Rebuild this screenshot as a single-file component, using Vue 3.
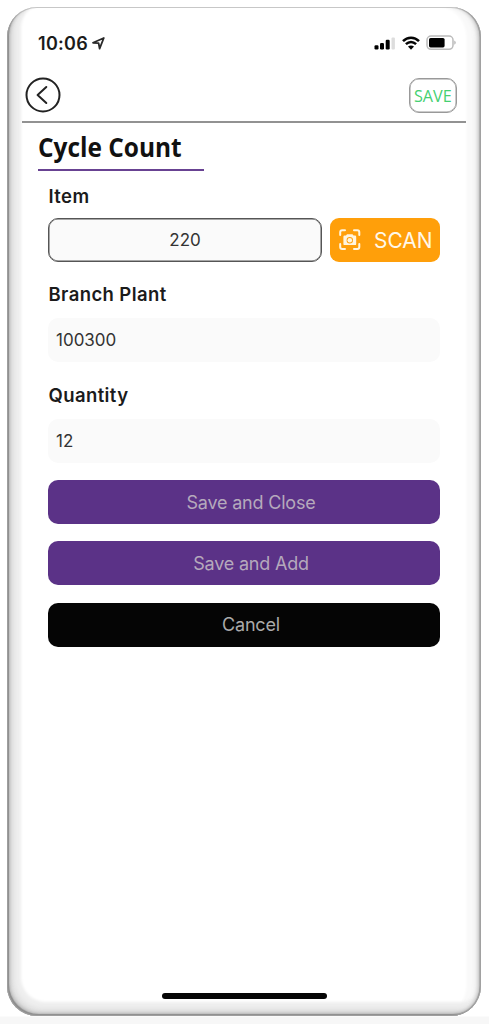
<script setup>
import { ref } from 'vue'
const item = ref('220')
const plant = ref('100300')
const quantity = ref('12')
</script>

<template>
  <div class="stage">
    <main class="phone">
      <div class="status">
        <span class="clock">10:06</span>
        <svg class="location" width="13" height="13" viewBox="0 0 13 13"><path d="M1 5.8 11.8 1 7.6 11.6 6.6 6.2Z" /></svg>
        <svg class="signal" width="22" height="14" viewBox="0 0 22 14">
          <rect x="0.5" y="9.3" width="4" height="4.2" rx="1.2" /><rect x="6" y="7" width="4" height="6.5" rx="1.2" />
          <rect x="11.7" y="3.8" width="4" height="9.7" rx="1.2" /><rect class="faint" x="17.5" y="1.5" width="3.4" height="12" rx="1" />
        </svg>
        <svg class="wifi" width="18" height="14" viewBox="0 0 18 14">
          <path d="M1 5.2C5.5.6 12.5.6 17 5.2M3.9 8.2C7 5.3 11 5.3 14.1 8.2" />
          <path class="dot" d="M6 10.6C7.8 9 10.2 9 12 10.6L9 13.8Z" />
        </svg>
        <svg class="battery" width="31" height="16" viewBox="0 0 31 16">
          <rect class="shell" x="1" y="1" width="26" height="13.3" rx="4" />
          <rect x="3" y="3" width="15.6" height="9.4" rx="1.6" />
          <path class="tip" d="M28.4 5.6Q31 7.7 28.4 9.8Z" />
        </svg>
      </div>

      <header class="bar">
        <button class="back" aria-label="Back">
          <svg width="36" height="36" viewBox="0 0 36 36"><circle cx="18" cy="18" r="16.5" /><path d="M21.3 10 12.6 18 21.3 26" /></svg>
        </button>
        <button class="save"><span>SAVE</span></button>
      </header>

      <h1><span>Cycle Count</span></h1>

      <section class="form">
        <label for="item">Item</label>
        <div class="scan-row">
          <input id="item" v-model="item" />
          <button class="scan">
            <svg width="22" height="22" viewBox="0 0 22 22">
              <path class="frame" d="M1.2 6V3.2Q1.2 1.2 3.2 1.2H6M15 1.2H18.3Q20.3 1.2 20.3 3.2V6M20.3 15V18Q20.3 20 18.3 20H15M6 20H3.2Q1.2 20 1.2 18V15" />
              <path class="camera" fill-rule="evenodd" d="M8 5.2H13.5L14.5 6.6H16Q17.2 6.6 17.2 7.8V14.9Q17.2 16.1 16 16.1H5.6Q4.4 16.1 4.4 14.9V7.8Q4.4 6.6 5.6 6.6H7ZM10.8 8A3.2 3.2 0 1 0 10.8 14.4A3.2 3.2 0 1 0 10.8 8Z" />
              <circle class="camera" cx="10.8" cy="11.2" r="2.3" />
            </svg>
            <span>SCAN</span>
          </button>
        </div>
        <label for="plant">Branch Plant</label>
        <input id="plant" v-model="plant" />
        <label for="quantity">Quantity</label>
        <input id="quantity" v-model="quantity" />
        <div class="actions">
          <button>Save and Close</button>
          <button>Save and Add</button>
          <button class="cancel">Cancel</button>
        </div>
      </section>
      <div class="home"></div>
    </main>
  </div>
</template>

<style>
body { background: #fff; }
</style>

<style scoped>
* { box-sizing: border-box; }
.stage {
  height: 1024px;
  padding: 7px 8px 8px 7px;
  overflow: hidden;
  background: linear-gradient(#fff 1016px, #f7f7f7 1017px);
  font-family: Inter, "Liberation Sans", sans-serif;
  color: #1b1b1b;
}
.phone {
  display: flex;
  flex-direction: column;
  height: 1009px;
  border-radius: 30px;
  background: #fff;
  box-shadow:
    inset 0 0 0 1px #aaaaaa99,
    inset 2px -2px 1px #8c8c8c,
    inset -2px 0 1px -0.5px #929292,
    inset 3px -3px 3px .5px #c0c0c0,
    inset -5px 0 3px -1.5px #cecece,
    inset 6px -6px 5px 1px #dfdfdf,
    inset -8px 0 4px -2px #eeeeee,
    inset 9px -9px 3px 5px #efefef,
    inset -16px 0 3px -1.5px #f9f9f9;
}
button { border: 0; padding: 0; font-family: inherit; }
svg { display: block; flex: none; }
.status {
  display: flex;
  align-items: center;
  height: 36px;
  margin-top: 18px;
  padding: 0 24px 0 31px;
}
.clock { width: 53px; font-size: 18px; font-weight: 600; letter-spacing: .3px; }
.location { margin-left: 1px; fill: none; stroke: #292929; stroke-width: 1.8; stroke-linejoin: round; }
.signal { margin-left: auto; }
.faint { fill: #ddd; }
.wifi { margin: 0 6px; fill: none; stroke: #050505; stroke-width: 2.5; }
.wifi .dot { fill: #050505; stroke: none; }
.battery .shell { fill: #fff; stroke: #bbb; stroke-width: 1.5; }
.battery .tip { fill: #aaa; }
.bar {
  display: flex;
  justify-content: space-between;
  height: 54px;
  margin: 8px 15px 0;
  padding: 8px 9px 0 3px;
  border-bottom: 2px solid #929292;
}
.back { width: 36px; height: 36px; background: none; }
.back svg { fill: none; stroke: #222; stroke-width: 2; stroke-linecap: round; stroke-linejoin: round; }
.save {
  display: flex;
  align-items: center;
  justify-content: center;
  width: 48px;
  height: 35px;
  margin-top: 1px;
  border: 1px solid #999;
  border-radius: 10px;
  box-shadow: inset 0 0 0 .5px #999;
  background: #fff;
  color: #45d071;
  font: 17px "Open Sans", sans-serif;
}
.save span { transform: scaleX(.95); }
h1 {
  width: 166px;
  height: 48px;
  margin: 0 0 0 31px;
  border-bottom: 2px solid #684292;
  color: #111;
  font: 700 26px/49px "Open Sans", sans-serif;
  white-space: nowrap;
}
h1 span { display: block; transform: scaleX(.94); transform-origin: left; }
.form { display: flex; flex-direction: column; width: 392px; margin: 10px 0 0 41px; }
label { height: 37px; padding-left: 0.5px; font-size: 18.5px; font-weight: 600; line-height: 30px; letter-spacing: .4px; }
input {
  width: 100%;
  height: 44px;
  padding: 0 8px;
  border: 0;
  border-radius: 10px;
  outline: none;
  background: #fafafa;
  color: #333;
  font: 17px Inter, sans-serif;
}
.scan-row { display: flex; gap: 8px; margin-bottom: 17px; }
.scan-row + label { height: 39px; }
.scan-row input { width: 274px; border: 1px solid #555; box-shadow: inset 0 0 0 .5px #555; text-align: center; }
#plant { margin-bottom: 18px; }
#plant + label { height: 39px; }
.scan {
  display: flex;
  align-items: center;
  gap: 13px;
  width: 110px;
  height: 44px;
  padding-left: 8.5px;
  border-radius: 9px;
  background: #ff9f0a;
  color: #fff8e9;
  font-size: 22px;
}
.scan span { transform: scaleX(.95); transform-origin: left; }
.frame { fill: none; stroke: #fff5df; stroke-width: 2; stroke-linecap: round; }
.camera { fill: #fff5df; }
.actions { display: flex; flex-direction: column; gap: 17.4px; margin-top: 17px; }
.actions button { height: 44px; padding-left: 14px; border-radius: 10px; background: #5b3287; color: #b5a9bc; font-size: 18px; letter-spacing: -.2px; }
.actions .cancel { background: #050505; color: #aaa; }
.home { width: 165px; height: 6px; margin: auto 0 17px 155px; border-radius: 3px; background: #050505; }
</style>
